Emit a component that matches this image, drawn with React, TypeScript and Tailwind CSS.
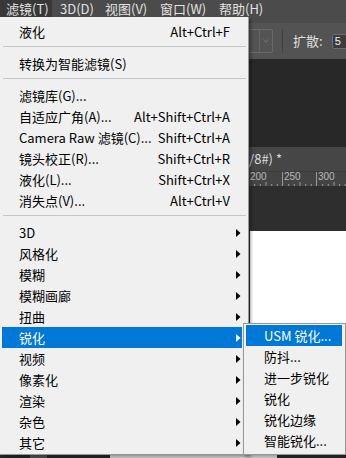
import { ChevronDown } from "lucide-react";
import clsx from "clsx";

type MenuItem =
  | { label: string; shortcut?: string; sub?: boolean; active?: boolean }
  | "sep";

const filterItems: MenuItem[] = [
  { label: "液化", shortcut: "Alt+Ctrl+F" },
  "sep",
  { label: "转换为智能滤镜(S)" },
  "sep",
  { label: "滤镜库(G)..." },
  { label: "自适应广角(A)...", shortcut: "Alt+Shift+Ctrl+A" },
  { label: "Camera Raw 滤镜(C)...", shortcut: "Shift+Ctrl+A" },
  { label: "镜头校正(R)...", shortcut: "Shift+Ctrl+R" },
  { label: "液化(L)...", shortcut: "Shift+Ctrl+X" },
  { label: "消失点(V)...", shortcut: "Alt+Ctrl+V" },
  "sep",
  { label: "3D", sub: true },
  { label: "风格化", sub: true },
  { label: "模糊", sub: true },
  { label: "模糊画廊", sub: true },
  { label: "扭曲", sub: true },
  { label: "锐化", sub: true, active: true },
  { label: "视频", sub: true },
  { label: "像素化", sub: true },
  { label: "渲染", sub: true },
  { label: "杂色", sub: true },
  { label: "其它", sub: true },
];

const sharpenItems = ["USM 锐化...", "防抖...", "进一步锐化", "锐化", "锐化边缘", "智能锐化..."];

const topMenus = [
  { label: "3D(D)", w: "w-[45px]" },
  { label: "视图(V)", w: "w-[55px]" },
  { label: "窗口(W)", w: "w-[59px]" },
  { label: "帮助(H)", w: "w-[60px]" },
];

const Arrow = ({ white }: { white?: boolean }) => (
  <svg width="5" height="8" viewBox="0 0 5 8" className="shrink-0">
    <path d="M0 0 L4.5 4 L0 8 Z" fill={white ? "#ffffff" : "#000000"} />
  </svg>
);

const RulerTicks = () => (
  <svg width="34" height="4" viewBox="0 0 34 4" className="block">
    {[5.7, 11.3, 17, 22.7, 28.3].map((x) => (
      <line key={x} x1={x} y1={x === 17 ? 0 : 2} x2={x} y2={4} stroke="#9a9a9a" strokeWidth="1" />
    ))}
  </svg>
);

export default function App() {
  return (
    <div className="relative h-[458px] w-[346px] overflow-hidden bg-[#2e2e2e] font-['Noto_Sans_CJK_SC',sans-serif]">
      {/* menu bar */}
      <div className="flex h-[23px] items-start bg-[#4b4b4b] text-[13px] leading-[17px] text-[#e2e2e2]">
        <div className="h-[17px] w-[52px] bg-[#383838] pl-[6px]">滤镜(T)</div>
        {topMenus.map((m) => (
          <div key={m.label} className={clsx("h-[17px] pl-[8px]", m.w)}>
            {m.label}
          </div>
        ))}
      </div>

      {/* options bar */}
      <div className="flex h-[36px] items-center bg-[#535353]">
        <div className="w-[230px] shrink-0" />
        <div className="flex h-[24px] w-[43px] shrink-0 items-center justify-end rounded-[2px] border border-[#6a6a6a]">
          <div className="h-full w-px bg-[#666666]" />
          <ChevronDown size={10} strokeWidth={1.5} className="mx-[1px] text-[#8c8c8c]" />
        </div>
        <div className="ml-[9px] h-[24px] w-px shrink-0 bg-[#404040]" />
        <div className="ml-[10px] shrink-0 text-[13px] text-[#dedede]">扩散:</div>
        <div className="ml-[9px] flex h-[15px] w-[30px] shrink-0 items-center rounded-[2px] border border-[#6e6e6e] bg-[#3c3c3c] pl-[2px] font-['Liberation_Sans',sans-serif] text-[11px] text-[#f0f0f0]">
          5
        </div>
      </div>

      <div className="h-[88px] bg-[#282828]" />

      {/* document tab, only its tail shows beside the menu */}
      <div className="flex h-[24px] items-center bg-[#464646]">
        <div className="w-[247px] shrink-0" />
        <div className="flex w-[35px] shrink-0 justify-end overflow-hidden whitespace-nowrap text-[13px] text-[#dcdcdc]">
          <span>B/8#) *</span>
        </div>
      </div>

      {/* ruler */}
      <div className="flex h-[15px] border-t border-[#3a3a3a] bg-[#444444]">
        <div className="w-[248px] shrink-0" />
        {["200", "250", "300"].map((n) => (
          <div key={n} className="flex h-full w-[34px] shrink-0 flex-col justify-between border-l border-[#9a9a9a]">
            <span className="pl-[1px] font-['Liberation_Sans',sans-serif] text-[10px] leading-[10px] text-[#b4b8bc]">{n}</span>
            <RulerTicks />
          </div>
        ))}
      </div>

      <div className="h-[45px] bg-[#2e2e2e]" />

      {/* canvas */}
      <div className="flex h-[224px]">
        <div className="w-[250px] bg-[#2e2e2e]" />
        <div className="flex-1 bg-white" />
      </div>

      <div className="flex h-[3px] bg-[#2a2a2a]">
        <div className="ml-[30px] w-[17px] bg-[#555555]" />
        <div className="ml-[63px] w-[167px] bg-[#dcdcdc]" />
      </div>

      {/* filter dropdown */}
      <div className="absolute left-0 top-[17px] w-[249px] border-b border-r border-[#979797] bg-[#f0f0f0] pb-px pl-[2px] pr-[6px] pt-[4px] text-[13px] text-black shadow-[2px_2px_3px_rgba(0,0,0,0.35)]">
        {filterItems.map((it, i) =>
          it === "sep" ? (
            <div key={i} className="-mr-[4px] mb-[6px] ml-px mt-[4px] h-px bg-[#c6c6c6]" />
          ) : (
            <div
              key={i}
              className={clsx(
                "flex h-[21px] items-center pl-[17px] pr-px",
                it.active ? "bg-[#0078d7] text-white" : "text-black"
              )}
            >
              <span className="flex-1 whitespace-nowrap">{it.label}</span>
              {it.shortcut && <span className="mr-[11px] whitespace-nowrap">{it.shortcut}</span>}
              {it.sub && <Arrow white={it.active} />}
            </div>
          )
        )}
      </div>

      {/* sharpen submenu */}
      <div className="absolute left-[243px] top-[323px] w-[103px] border border-[#979797] bg-[#f0f0f0] pb-[3px] pl-[2px] pr-[3px] pt-px text-[13px] shadow-[2px_2px_3px_rgba(0,0,0,0.3)]">
        {sharpenItems.map((s, i) => (
          <div
            key={s}
            className={clsx(
              "flex h-[21px] items-center whitespace-nowrap pl-[18px]",
              i === 0 ? "bg-[#0078d7] text-white" : "text-black"
            )}
          >
            {s}
          </div>
        ))}
      </div>
    </div>
  );
}
